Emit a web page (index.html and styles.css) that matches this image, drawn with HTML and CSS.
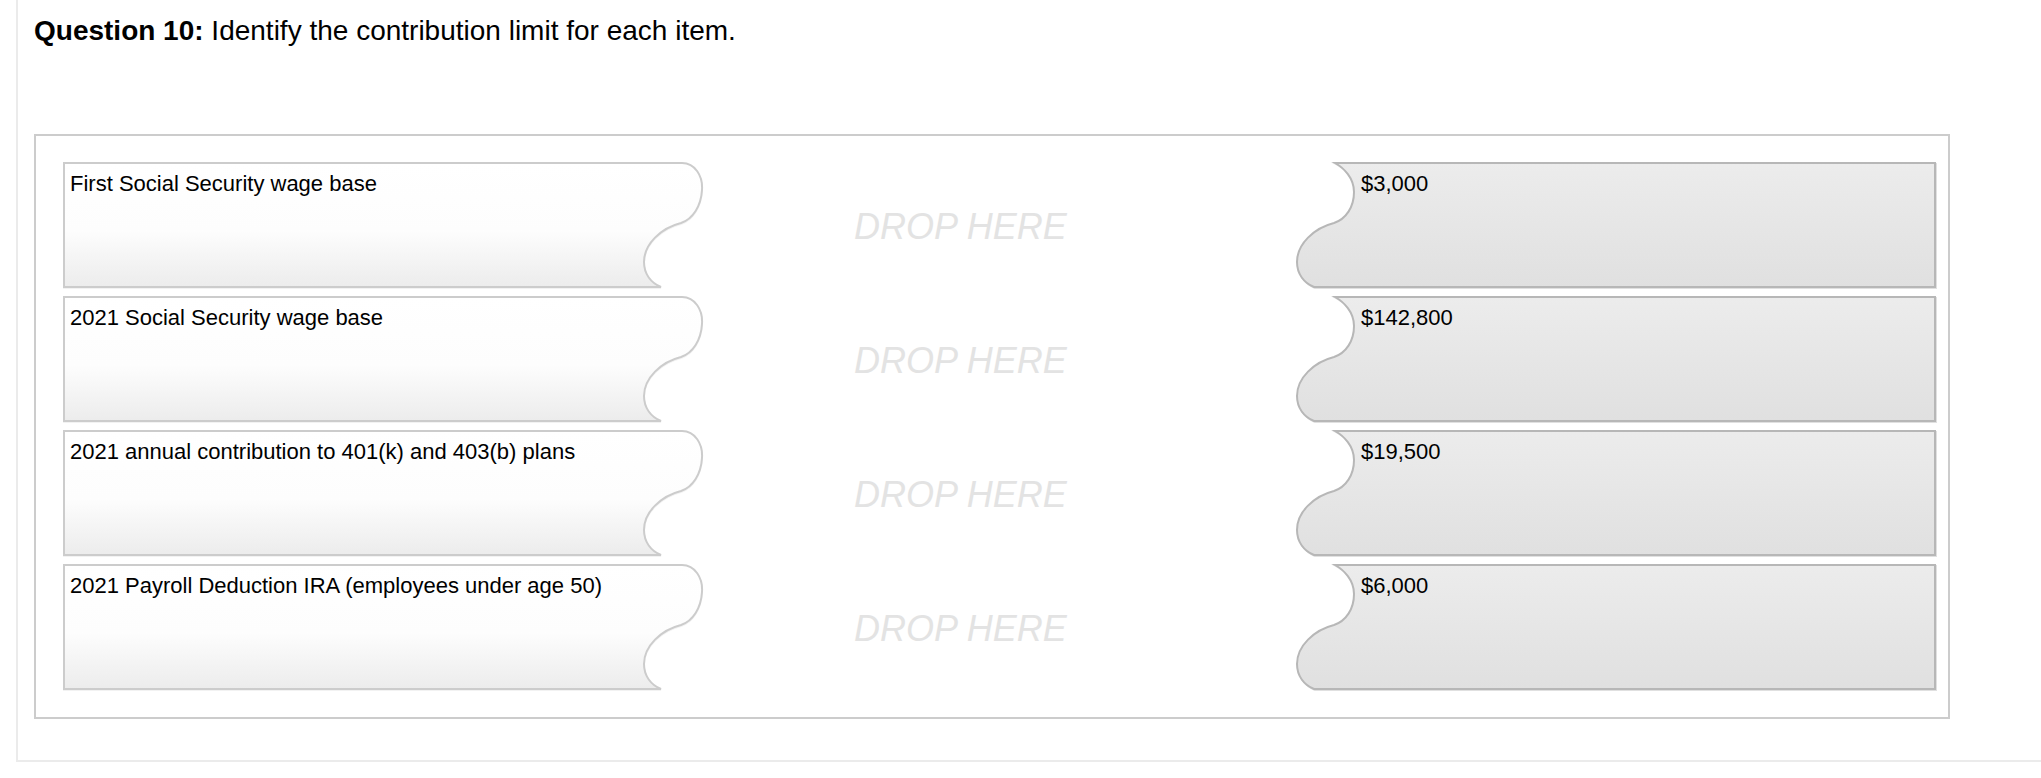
FILE: index.html
```html
<!DOCTYPE html>
<html lang="en">
<head>
<meta charset="utf-8">
<title>Question 10</title>
<link rel="stylesheet" href="styles.css">
</head>
<body>
<div class="panel">
  <h1 class="question"><strong>Question 10:</strong> Identify the contribution limit for each item.</h1>
  <div class="match-box">
    <div class="match-row">
      <div class="card card-left">
        <svg class="card-shape" viewBox="0 0 640 126" width="640" height="126" aria-hidden="true"><defs><linearGradient id="gl1" x1="0" y1="0" x2="0" y2="1"><stop offset="0" stop-color="#ffffff"/><stop offset="0.55" stop-color="#fdfdfd"/><stop offset="1" stop-color="#ececec"/></linearGradient></defs><path d="M1,1 H619 C632,1 640,14 639,28 C638,44 630,57 618,61 C598,66 581,82 581,100 C581,112 588,121 598,125 H1 Z" fill="url(#gl1)" stroke="#cccccc" stroke-width="2"/></svg>
        <span class="card-text">First Social Security wage base</span>
      </div>
      <div class="drop-zone">DROP HERE</div>
      <div class="card card-right">
        <svg class="card-shape" viewBox="0 0 640 126" width="640" height="126" aria-hidden="true"><defs><linearGradient id="gr1" x1="0" y1="0" x2="0" y2="1"><stop offset="0" stop-color="#ececec"/><stop offset="1" stop-color="#e0e0e0"/></linearGradient></defs><path d="M39,1 H639 V125 H18 C8,121 1,112 1,100 C1,82 18,66 38,61 C50,57 58,45 58,30 C58,16 48,6 39,1 Z" fill="url(#gr1)" stroke="#b7b7b7" stroke-width="2"/></svg>
        <span class="card-text">$3,000</span>
      </div>
    </div>
    <div class="match-row">
      <div class="card card-left">
        <svg class="card-shape" viewBox="0 0 640 126" width="640" height="126" aria-hidden="true"><path d="M1,1 H619 C632,1 640,14 639,28 C638,44 630,57 618,61 C598,66 581,82 581,100 C581,112 588,121 598,125 H1 Z" fill="url(#gl1)" stroke="#cccccc" stroke-width="2"/></svg>
        <span class="card-text">2021 Social Security wage base</span>
      </div>
      <div class="drop-zone">DROP HERE</div>
      <div class="card card-right">
        <svg class="card-shape" viewBox="0 0 640 126" width="640" height="126" aria-hidden="true"><path d="M39,1 H639 V125 H18 C8,121 1,112 1,100 C1,82 18,66 38,61 C50,57 58,45 58,30 C58,16 48,6 39,1 Z" fill="url(#gr1)" stroke="#b7b7b7" stroke-width="2"/></svg>
        <span class="card-text">$142,800</span>
      </div>
    </div>
    <div class="match-row">
      <div class="card card-left">
        <svg class="card-shape" viewBox="0 0 640 126" width="640" height="126" aria-hidden="true"><path d="M1,1 H619 C632,1 640,14 639,28 C638,44 630,57 618,61 C598,66 581,82 581,100 C581,112 588,121 598,125 H1 Z" fill="url(#gl1)" stroke="#cccccc" stroke-width="2"/></svg>
        <span class="card-text">2021 annual contribution to 401(k) and 403(b) plans</span>
      </div>
      <div class="drop-zone">DROP HERE</div>
      <div class="card card-right">
        <svg class="card-shape" viewBox="0 0 640 126" width="640" height="126" aria-hidden="true"><path d="M39,1 H639 V125 H18 C8,121 1,112 1,100 C1,82 18,66 38,61 C50,57 58,45 58,30 C58,16 48,6 39,1 Z" fill="url(#gr1)" stroke="#b7b7b7" stroke-width="2"/></svg>
        <span class="card-text">$19,500</span>
      </div>
    </div>
    <div class="match-row">
      <div class="card card-left">
        <svg class="card-shape" viewBox="0 0 640 126" width="640" height="126" aria-hidden="true"><path d="M1,1 H619 C632,1 640,14 639,28 C638,44 630,57 618,61 C598,66 581,82 581,100 C581,112 588,121 598,125 H1 Z" fill="url(#gl1)" stroke="#cccccc" stroke-width="2"/></svg>
        <span class="card-text">2021 Payroll Deduction IRA (employees under age 50)</span>
      </div>
      <div class="drop-zone">DROP HERE</div>
      <div class="card card-right">
        <svg class="card-shape" viewBox="0 0 640 126" width="640" height="126" aria-hidden="true"><path d="M39,1 H639 V125 H18 C8,121 1,112 1,100 C1,82 18,66 38,61 C50,57 58,45 58,30 C58,16 48,6 39,1 Z" fill="url(#gr1)" stroke="#b7b7b7" stroke-width="2"/></svg>
        <span class="card-text">$6,000</span>
      </div>
    </div>
  </div>
</div>
</body>
</html>
```

FILE: styles.css
```css
html, body {
  margin: 0;
  padding: 0;
  background: #ffffff;
  overflow: hidden;
}

body {
  font-family: "Liberation Sans", Arial, Helvetica, sans-serif;
  color: #000000;
}

.panel {
  margin-left: 16px;
  padding: 15px 0 41px 16px;
  border-left: 2px solid #ebebeb;
  border-bottom: 2px solid #ebebeb;
}

.question {
  margin: 0 0 87px 0;
  font-size: 28px;
  font-weight: normal;
  line-height: 32px;
}

.question strong {
  font-weight: bold;
}

.match-box {
  width: 1916px;
  box-sizing: border-box;
  border: 2px solid #cccccc;
  padding: 26px 12px 27px 27px;
  display: flex;
  flex-direction: column;
  gap: 8px;
}

.match-row {
  display: grid;
  grid-template-columns: 640px 1fr 640px;
  height: 126px;
}

.card {
  position: relative;
  height: 126px;
}

.card-shape {
  position: absolute;
  left: 0;
  top: 0;
  overflow: visible;
}

.card-left .card-shape {
  filter: drop-shadow(0 1px 0 rgba(0, 0, 0, 0.05));
}

.card-right .card-shape {
  filter: drop-shadow(1px 1px 0 rgba(0, 0, 0, 0.12));
}

.card-text {
  position: relative;
  display: block;
  font-size: 22px;
  line-height: 25px;
  padding-top: 9px;
}

.card-left .card-text {
  padding-left: 7px;
}

.card-right .card-text {
  padding-left: 65px;
}

.drop-zone {
  display: flex;
  align-items: center;
  padding: 3px 0 0 151px;
  font-size: 36px;
  font-style: italic;
  color: #e3e3e3;
  white-space: nowrap;
}
```
